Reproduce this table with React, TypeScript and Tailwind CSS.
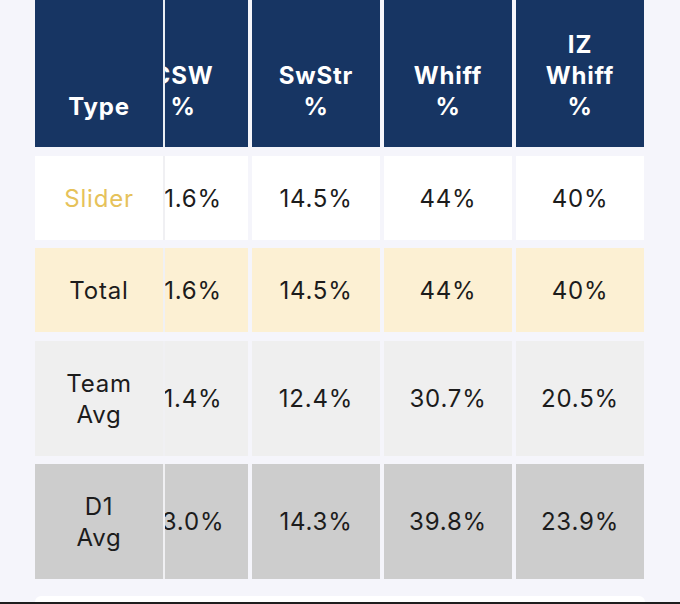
import React from "react";

type Row = {
    label: string[];
    values: [string, string, string, string];
    bg: string;
    labelColor: string;
    height: string;
    top: string;
};

const rows: Row[] = [
    {label: ["Slider"], values: ["1.6%", "14.5%", "44%", "40%"], bg: "bg-white", labelColor: "text-[#e6c25a]", height: "h-[84px]", top: "mt-[9px]"},
    {label: ["Total"], values: ["1.6%", "14.5%", "44%", "40%"], bg: "bg-[#fcf0d3]", labelColor: "text-[#1c1c1c]", height: "h-[84px]", top: "mt-[8px]"},
    {label: ["Team", "Avg"], values: ["1.4%", "12.4%", "30.7%", "20.5%"], bg: "bg-[#efefef]", labelColor: "text-[#1c1c1c]", height: "h-[115px]", top: "mt-[9px]"},
    {label: ["D1", "Avg"], values: ["3.0%", "14.3%", "39.8%", "23.9%"], bg: "bg-[#cdcdcd]", labelColor: "text-[#1c1c1c]", height: "h-[115px]", top: "mt-[8px]"},
];

const headers: string[][] = [["CSW", "%"], ["SwStr", "%"], ["Whiff", "%"], ["IZ", "Whiff", "%"]];

function Lines({lines}: { lines: string[] }) {
    return (
        <>
            {lines.map((l, i) => (
                <span key={i} className="block">{l}</span>
            ))}
        </>
    );
}

export default function App() {
    return (
        <div className="h-[604px] w-[680px] overflow-hidden bg-[#f5f5fb] flex flex-col font-['Inter','Liberation_Sans',sans-serif] text-[24px] leading-[31px] tracking-[0.8px]">
            <div className="pl-[35px] flex-1">
                {/* header */}
                <div className="flex h-[147px] text-white font-bold">
                    <div className="w-[130px] shrink-0 border-r-2 border-[#e9edf3] bg-[#173563] flex items-end justify-center pb-[25px]">
                        Type
                    </div>
                    <div className="w-[83px] shrink-0 overflow-hidden bg-[#173563] flex items-end pb-[25px]">
                        <div className="w-[128px] shrink-0 ml-[-46px] text-center">
                            <Lines lines={headers[0]}/>
                        </div>
                    </div>
                    {headers.slice(1).map((h, i) => (
                        <div key={i} className="w-[128px] shrink-0 ml-[4px] bg-[#173563] flex items-end justify-center text-center pb-[25px]">
                            <div><Lines lines={h}/></div>
                        </div>
                    ))}
                </div>

                {/* body */}
                {rows.map((r, i) => (
                    <div key={i} className={`flex ${r.height} ${r.top} text-[#1c1c1c]`}>
                        <div className={`w-[130px] shrink-0 border-r-2 border-[#f0f0f3] ${r.bg} ${r.labelColor} flex items-center justify-center text-center`}>
                            <div><Lines lines={r.label}/></div>
                        </div>
                        <div className={`w-[83px] shrink-0 overflow-hidden ${r.bg} flex items-center`}>
                            <div className="w-[128px] shrink-0 ml-[-36px] text-center">{r.values[0]}</div>
                        </div>
                        {r.values.slice(1).map((v, j) => (
                            <div key={j} className={`w-[128px] shrink-0 ml-[4px] ${r.bg} flex items-center justify-center`}>
                                {v}
                            </div>
                        ))}
                    </div>
                ))}
            </div>

            <div className="mx-[35px] h-[6px] rounded-t-xl bg-white"/>
            <div className="h-[2px] bg-[#1e1e1e]"/>
        </div>
    );
}
